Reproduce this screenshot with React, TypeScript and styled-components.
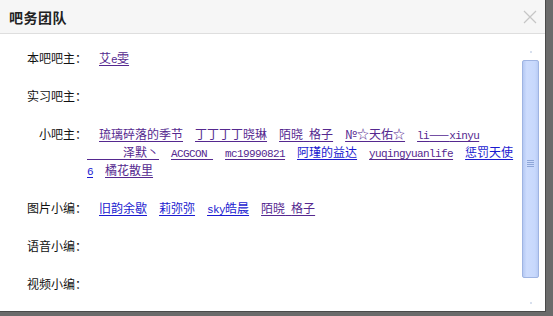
import React, { FunctionComponent } from 'react';
import styled, { createGlobalStyle } from 'styled-components';

interface IMember {
  name: string;
  fresh?: boolean;
}

interface IRole {
  label: string;
  members: IMember[];
}

// \u2060 keeps the leading ideographic spaces glued to the name
const roles: IRole[] = [
  { label: '本吧吧主：', members: [{ name: '艾e雯' }] },
  { label: '实习吧主：', members: [] },
  {
    label: '小吧主：',
    members: [
      { name: '琉璃碎落的季节' },
      { name: '丁丁丁丁晓琳' },
      { name: '陌晓 格子' },
      { name: '№☆天佑☆' },
      { name: 'li——xinyu' },
      { name: '\u3000\u2060\u3000\u2060\u3000\u2060泽默丶' },
      { name: 'ACGCON\u00a0' },
      { name: 'mc19990821' },
      { name: '阿瑾的益达', fresh: true },
      { name: 'yuqingyuanlife' },
      { name: '惩罚天使6', fresh: true },
      { name: '橘花散里' },
    ],
  },
  {
    label: '图片小编：',
    members: [
      { name: '旧韵余歇', fresh: true },
      { name: '莉弥弥', fresh: true },
      { name: 'sky皓晨', fresh: true },
      { name: '陌晓 格子' },
    ],
  },
  { label: '语音小编：', members: [] },
  { label: '视频小编：', members: [] },
];

const LATIN = /^[\x20-\x7e\u00a0]+$/;

// SimSun draws latin at half width, the mono run keeps that 6px step
const renderName = (name: string) =>
  name
    .split(/([\x20-\x7e\u00a0]+)/)
    .filter(Boolean)
    .map((part, i) =>
      LATIN.test(part) ? <Latin key={i}>{part}</Latin> : <span key={i}>{part}</span>
    );

export const TeamDialog: FunctionComponent = () => (
  <Dialog>
    <Header>
      <Title>吧务团队</Title>
      <CloseButton type="button" aria-label="关闭">
        <svg width="14" height="14" viewBox="0 0 14 14">
          <path d="M1 1 L13 13 M13 1 L1 13" stroke="#c6c6c6" strokeWidth="1.2" fill="none" />
        </svg>
      </CloseButton>
    </Header>
    <Body>
      <Content>
        {roles.map((role) => (
          <Row key={role.label}>
            <Label>{role.label}</Label>
            <Value>
              {role.members.map((m, i) => (
                <React.Fragment key={i}>
                  <MemberLink href="#" $fresh={m.fresh}>
                    {renderName(m.name)}
                  </MemberLink>
                  <wbr />
                </React.Fragment>
              ))}
            </Value>
          </Row>
        ))}
      </Content>
      <ScrollBar>
        <ArrowCell />
        <Track>
          <Thumb>
            <Grip />
          </Thumb>
        </Track>
        <ArrowCell />
      </ScrollBar>
    </Body>
  </Dialog>
);

const GlobalStyle = createGlobalStyle`
  html, body {
    margin: 0;
    padding: 0;
    background: #6b6b6b;
  }

  body {
    font-family: "Noto Sans CJK SC", "Liberation Sans", sans-serif;
    width: 553px;
    height: 316px;
    overflow: hidden;
  }
`;

const Dialog = styled.div`
  background: #fff;
  border-bottom: 1px solid #4a4a4a;
  border-right: 1px solid #4a4a4a;
  display: flex;
  flex-direction: column;
  height: 311px;
  width: 545px;
`;

const Header = styled.div`
  align-items: center;
  background: #f6f6f6;
  border-bottom: 1px solid #dedede;
  display: flex;
  flex-shrink: 0;
  height: 33px;
  justify-content: space-between;
  padding: 0 8px 0 9px;
`;

const Title = styled.h2`
  color: #222;
  font-size: 14px;
  font-weight: 700;
  letter-spacing: 0.5px;
  margin: 0;
`;

const CloseButton = styled.button`
  background: none;
  border: 0;
  cursor: pointer;
  display: flex;
  height: 14px;
  padding: 0;
  width: 14px;
`;

const Body = styled.div`
  display: flex;
  flex: 1;
  min-height: 0;
`;

const Content = styled.div`
  display: flex;
  flex: 1;
  flex-direction: column;
  gap: 20px;
  overflow: hidden;
  padding: 15px 7px 0 0;
`;

const Row = styled.div`
  display: flex;
  font-size: 12px;
  line-height: 18px;
`;

const Label = styled.div`
  color: #111;
  flex-shrink: 0;
  text-align: right;
  width: 87px;
`;

const Value = styled.div`
  flex: 1;
  text-indent: 12px;
`;

const MemberLink = styled.a<{ $fresh?: boolean }>`
  color: ${(p) => (p.$fresh ? '#1a1ad0' : '#55288f')};
  margin-right: 12px;
  text-decoration: underline;
  text-underline-offset: 2px;
`;

const Latin = styled.span`
  font-family: "Liberation Mono", "DejaVu Sans Mono", monospace;
  font-size: 11px;
  letter-spacing: -0.6px;
  line-height: 1;
`;

const ScrollBar = styled.div`
  display: flex;
  flex-direction: column;
  flex-shrink: 0;
  margin-right: 6px;
  padding-top: 9px;
  width: 17px;
`;

const ArrowCell = styled.div`
  align-items: center;
  display: flex;
  flex-shrink: 0;
  height: 17px;
  justify-content: center;

  &::after {
    background: #d8e0ee;
    content: '';
    height: 2px;
    width: 2px;
  }
`;

const Track = styled.div`
  flex: 1;
`;

const Thumb = styled.div`
  align-items: center;
  background: linear-gradient(to right, #b5c9f3, #cddcfd 25%, #c7d8fc 80%, #b9ccf4);
  border: 1px solid #9fb4e2;
  border-radius: 2px;
  box-sizing: border-box;
  display: flex;
  height: 218px;
  justify-content: center;
`;

const Grip = styled.div`
  background: repeating-linear-gradient(
    to bottom,
    #8ea6d8 0,
    #8ea6d8 1px,
    transparent 1px,
    transparent 2px
  );
  height: 7px;
  margin-top: -12px;
  width: 7px;
`;

const App: FunctionComponent = () => (
  <>
    <GlobalStyle />
    <TeamDialog />
  </>
);

export default App;
